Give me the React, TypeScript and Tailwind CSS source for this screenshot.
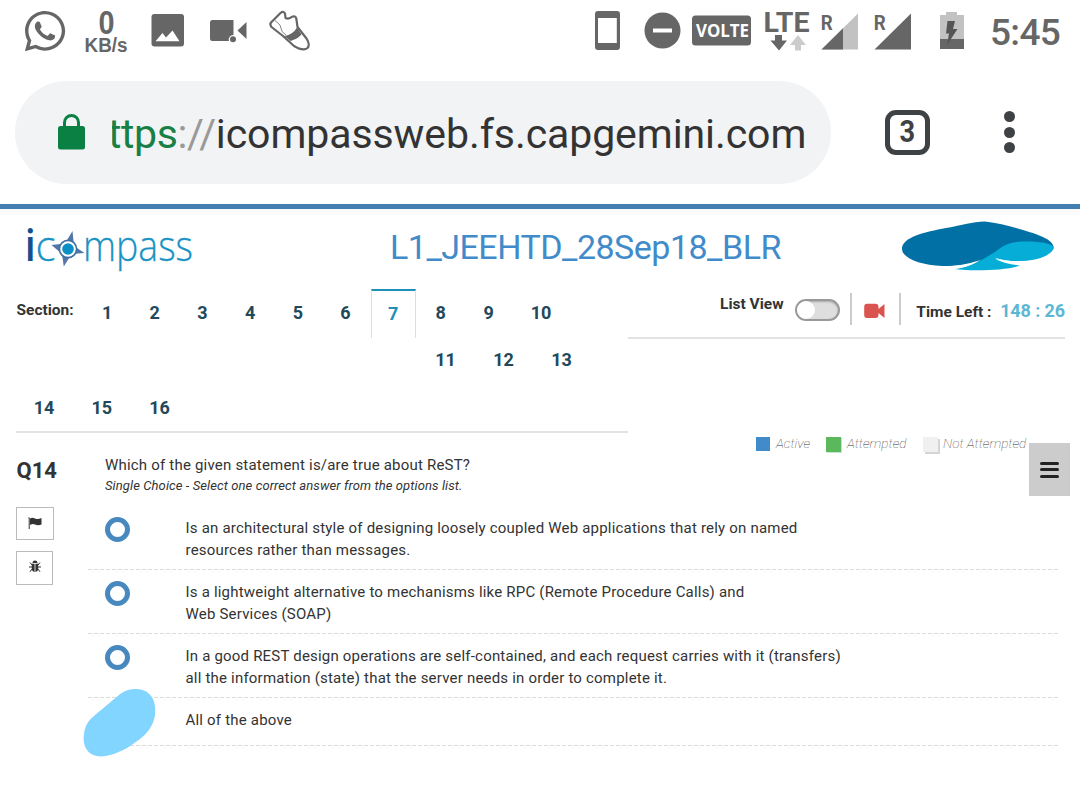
import React from "react";
import { FaWhatsapp } from "react-icons/fa";

const GREY = "#666666";

function StatusBar() {
  return (
    <div className="flex h-[64px] items-start text-[#666666]">
      <FaWhatsapp className="ml-[22px] mt-[8px] h-[46px] w-[46px] shrink-0" />
      <svg className="ml-[16px] mt-[8px] shrink-0 overflow-visible" width="46" height="46" viewBox="84 8 46 46" fill={GREY}>
        <text x="98.500" y="33.500" fontFamily="Liberation Sans" fontWeight="700" fontSize="34" textLength="16" lengthAdjust="spacingAndGlyphs">0</text>
        <text x="84.500" y="51.500" fontFamily="Liberation Sans" fontWeight="700" fontSize="19.500" textLength="43" lengthAdjust="spacingAndGlyphs">KB/s</text>
      </svg>
      <svg className="ml-[20px] mt-[12px] shrink-0" width="36" height="36" viewBox="150 12 36 36">
        <rect x="151.500" y="14" width="32.500" height="32.500" rx="3" fill={GREY} />
        <path d="M155.500 41.200 L162.500 33 L166 37.500 L172.500 30.500 L179.500 41.200 Z" fill="#fff" />
      </svg>
      <svg className="ml-[22px] mt-[16px] shrink-0" width="42" height="30" viewBox="208 16 42 30">
        <path d="M212.500 20 H233.500 V35 A4.500 4.500 0 0 0 229 41 H212.500 A2.500 2.500 0 0 1 210 38.500 V22.500 A2.500 2.500 0 0 1 212.500 20Z M237.500 30.500 L246.500 22 V39 Z" fill={GREY} />
        <circle cx="233" cy="39.300" r="3" fill={GREY} />
      </svg>
      <svg className="ml-[18px] mt-[8px] shrink-0" width="46" height="46" viewBox="268 8 46 46">
        <path d="M271 22.500 L280.500 13 Q283.500 10.500 285 13.500 L285.500 18 Q289 19.500 292 16.800 Q295.500 15.500 296.300 18.500 L297.500 27 L306.500 38.500 Q310.500 45 307.500 48 Q303.500 51.500 294 46 L283 36 L271.500 27 Q269.500 24.500 271 22.500Z" fill="#fff" stroke={GREY} strokeWidth="2.200" strokeLinejoin="round" />
        <path d="M284.500 36 Q293 34.500 297 27.500 L301.500 34.500 Q297.500 39 290.500 41Z" fill={GREY} />
        <path d="M275 20.500 L280 25 L282 31.500 L286 35" fill="none" stroke={GREY} strokeWidth="0.800" />
      </svg>
      <svg className="ml-[280px] mt-[9px] shrink-0" width="28" height="43" viewBox="594 9 28 43">
        <path fillRule="evenodd" fill={GREY} d="M598 11 H617 Q620 11 620 14 V47 Q620 50 617 50 H598 Q595 50 595 47 V14 Q595 11 598 11Z M598 18 V43 H616.800 V18Z" />
      </svg>
      <svg className="ml-[21px] mt-[11px] shrink-0" width="40" height="40" viewBox="643 11 40 40">
        <circle cx="662.500" cy="30.500" r="18" fill={GREY} />
        <rect x="653" y="28.500" width="19" height="4" fill="#fff" />
      </svg>
      <svg className="ml-[7px] mt-[13px] shrink-0" width="64" height="36" viewBox="690 13 64 36">
        <rect x="692" y="15.500" width="59" height="30" rx="3.500" fill={GREY} />
        <text x="696" y="37" fill="#fff" fontFamily="Open Sans" fontWeight="700" fontSize="17.500" textLength="53" lengthAdjust="spacingAndGlyphs">VOLTE</text>
      </svg>
      <svg className="ml-[9px] mt-[8px] shrink-0 overflow-visible" width="48" height="46" viewBox="763 8 48 46">
        <text x="763.500" y="31.700" fill={GREY} fontFamily="Roboto" fontWeight="700" fontSize="27.500" textLength="46" lengthAdjust="spacingAndGlyphs">LTE</text>
        <path d="M775 35 H782 V40.500 H787 L779 50.500 L770.500 40.500 H775Z" fill={GREY} />
        <path d="M798 35 L806 45 H801 V50.500 H795 V45 H790Z" fill="#cccccc" />
      </svg>
      <svg className="ml-[9px] mt-[10px] shrink-0" width="40" height="42" viewBox="820 10 40 42">
        <path d="M821.500 49.500 L858 13.500 V49.500Z" fill="#c2c2c2" />
        <path d="M821.500 49.500 L843 28.200 V49.500Z" fill={GREY} />
        <text x="820.700" y="29.500" fill={GREY} fontFamily="Roboto" fontWeight="700" fontSize="21" textLength="12" lengthAdjust="spacingAndGlyphs">R</text>
      </svg>
      <svg className="ml-[13px] mt-[10px] shrink-0" width="40" height="42" viewBox="873 10 40 42">
        <path d="M874.500 49.500 L911 13.500 V49.500Z" fill={GREY} />
        <text x="873.700" y="29.500" fill={GREY} fontFamily="Roboto" fontWeight="700" fontSize="21" textLength="12" lengthAdjust="spacingAndGlyphs">R</text>
      </svg>
      <svg className="ml-[25px] mt-[10px] shrink-0" width="28" height="42" viewBox="938 10 28 42">
        <path d="M946 12 H957 V15 H964 V39 H940 V15 H946Z" fill="#c2c2c2" />
        <rect x="940" y="39" width="24" height="10" fill={GREY} />
        <path d="M947.500 21 H955 L953 29 H957.500 L947 45 L949 33.500 H946Z" fill="#555" />
      </svg>
      <span className="ml-[24px] mt-[12px] whitespace-nowrap font-['Roboto',sans-serif] text-[37px] font-medium leading-[42px] tracking-[-0.700px]">5:45</span>
    </div>
  );
}

function AddressBar() {
  return (
    <div className="flex h-[140px] items-start pl-[15px] pt-[17px]">
      <div className="flex h-[103px] w-[816px] shrink-0 items-center rounded-full bg-[#f1f3f5] pl-[42px]">
        <svg className="shrink-0" width="30" height="40" viewBox="57 113 30 40">
          <path d="M64.500 128 V122.500 A7 7 0 0 1 78.500 122.500 V128" fill="none" stroke="#0b8043" strokeWidth="3" />
          <rect x="58" y="126" width="27" height="23.500" rx="2.500" fill="#0b8043" />
        </svg>
        <div className="ml-[25px] mt-[2px] flex w-[700px] overflow-hidden whitespace-nowrap font-['Roboto',sans-serif] text-[41px] leading-[56px] text-[#333]">
          <span className="-ml-[4px] tracking-[-0.400px] text-[#188045]">ttps</span>
          <span className="tracking-[-0.300px] text-[#999]">://</span>
          <span className="tracking-[-0.080px]">icompassweb.fs.capgemini.com</span>
        </div>
      </div>
      <div className="ml-[54px] mt-[29px] flex h-[45px] w-[45px] shrink-0 items-center justify-center rounded-[11px] border-[5px] border-[#3f4245] font-['Roboto',sans-serif] text-[32px] font-bold leading-none text-[#3f4245]">
        <span className="-mt-[4px] scale-x-85">3</span>
      </div>
      <div className="ml-[74px] mt-[30px] flex flex-col gap-[4.500px]">
        <i className="size-[11px] rounded-full bg-[#3f4245]" />
        <i className="size-[11px] rounded-full bg-[#3f4245]" />
        <i className="size-[11px] rounded-full bg-[#3f4245]" />
      </div>
    </div>
  );
}

function CompassLogo() {
  return (
    <svg className="shrink-0 overflow-visible" width="176" height="60" viewBox="20 218 176 60" fontFamily="Open Sans">
      <text x="24.800" y="261" fontSize="43" fontWeight="600" fill="#14508c" textLength="11" lengthAdjust="spacingAndGlyphs">i</text>
      <g fontWeight="300" fill="#1a93c4" stroke="#1a93c4" strokeWidth="0.300">
        <text x="35.500" y="261" fontSize="43" textLength="20" lengthAdjust="spacingAndGlyphs">c</text>
        <text x="83" y="261" fontSize="43" textLength="110" lengthAdjust="spacingAndGlyphs">mpass</text>
      </g>
      <path d="M72.500 231 L74 246 L84.500 253 L71.500 254 L63.800 266.500 L62 254 L51.500 245 L65 243.500Z" fill="#5276a8" />
      <circle cx="68" cy="249" r="8.600" fill="#fff" stroke="#3f6fa3" strokeWidth="1.600" />
      <circle cx="68" cy="249" r="5.800" fill="#0b8fc4" />
    </svg>
  );
}

function WaveLogo() {
  return (
    <svg className="shrink-0" width="156" height="52" viewBox="900 220 156 52">
      <path d="M902 249 C902 237 925 232 946 228 C963 225 972 222 985 221.500 C998 223 1010 226 1023 230 C1040 235 1053 240 1053.500 247 L1012 258 L993 256 C980 264 962 266 942 266 C920 265 902 258 902 249Z" fill="#0070a5" />
      <path d="M1054 247 C1050 242 1034 241 1021 241.500 C1002 243 1000 250 990 255 C985 258 982 260 976 262.500 C970 266 962 268 954.500 269 C970 271 1004 271 1020 265.500 C1010 264.500 1000 262 995 258.500 C1006 262 1024 262 1037 259 C1048 256 1054 251 1054 247Z" fill="#05add7" />
      <path d="M942 266.800 C960 266 974 262.500 981 259.500 C976 263 968 267 954 269 Z M995 257.500 C1003 261 1020 262.500 1035 260 C1028 264 1004 264 995 257.500Z" fill="#fff" />
    </svg>
  );
}

function Header() {
  return (
    <header className="flex h-[80px] items-start border-t-[5px] border-[#437eb0]">
      <div className="flex h-full w-full items-start bg-linear-to-b from-[#f9f7f8] to-white to-10%">
        <div className="ml-[20px] mt-[9px]"><CompassLogo /></div>
        <h1 className="ml-[194px] mt-[16px] w-[511px] whitespace-nowrap font-['Roboto',sans-serif] text-[34px] leading-[44px] tracking-[-0.500px] text-[#428bca]">L1_JEEHTD_28Sep18_BLR</h1>
        <div className="-ml-[1px] mt-[11px]"><WaveLogo /></div>
      </div>
    </header>
  );
}

function Sections() {
  return (
    <nav className="ml-[16px] flex h-[144px] w-[612px] shrink-0 flex-col border-b-2 border-[#e3e3e3] text-[18px] font-bold leading-[48px] text-[#22495a]">
      <div className="flex h-[49px] text-center">
        <span className="w-[67px] whitespace-nowrap pl-[0.500px] text-left text-[15.500px] leading-[42px] text-[#333]">Section:</span>
        {[1, 2, 3, 4, 5, 6].map((n) => (
          <span key={n} className="w-[47.700px] pl-[0.500px]">{n}</span>
        ))}
        <span className="ml-[2px] w-[45px] border-x border-t-2 border-x-[#ddd] border-t-[#1f90b8] pr-px leading-[45px] text-[#1f90b8]">7</span>
        <span className="w-[49px]">8</span>
        <span className="w-[47px]">9</span>
        <span className="w-[58px]">10</span>
      </div>
      <div className="flex h-[48px] pl-[400.500px] text-center leading-[44px]">
        {[11, 12, 13].map((n) => (
          <span key={n} className="w-[58px]">{n}</span>
        ))}
      </div>
      <div className="flex h-[45px] text-center leading-[44px]">
        {[14, 15, 16].map((n) => (
          <span key={n} className="w-[57.700px] pr-[1.500px]">{n}</span>
        ))}
      </div>
    </nav>
  );
}

function Tools() {
  return (
    <div className="flex w-[452px] flex-col">
      <div className="flex h-[50px] w-[437px] shrink-0 items-start border-b-2 border-[#e3e3e3] text-[15.500px] font-bold text-[#333]">
        <span className="ml-[92px] mt-[5px] w-[75px] whitespace-nowrap leading-5">List View</span>
        <div className="mt-[10px] h-[22px] w-[45px] rounded-full border-2 border-[#999] bg-[#dedede] shadow-[inset_0_1px_2px_#aaa]">
          <div className="size-[18px] rounded-full bg-white" />
        </div>
        <i className="ml-[10px] mt-[4px] h-[32px] w-[2px] bg-[#ccc]" />
        <svg className="ml-[12px] mt-[14px]" width="21" height="16" viewBox="0 0 21 16">
          <path d="M3 .8 H11.500 Q14.500 .8 14.500 4 V6 L20.500 1 V15 L14.500 10 V12 Q14.500 15 11.500 15 H3 Q.2 15 .2 12 V4 Q.2 .8 3 .8Z" fill="#d9534f" />
        </svg>
        <i className="ml-[14px] mt-[4px] h-[32px] w-[2px] bg-[#ccc]" />
        <span className="ml-[15.500px] mt-[13px] w-[84px] whitespace-nowrap leading-5">Time Left :</span>
        <span className="mt-[12px] whitespace-nowrap text-[18px] leading-5 tracking-[-0.100px] text-[#5bb7d3]">148 : 26</span>
      </div>
      <div className="flex h-[158px] shrink-0 items-start justify-end pr-[10px] pt-[96px]">
        <div className="flex h-[56px] items-start whitespace-nowrap text-[13.500px] font-thin italic leading-[17px] text-[#333]">
          <i className="mr-[6px] mt-[2px] size-[14px] bg-[#428bca]" />
          <span className="w-[50px]">Active</span>
          <i className="mr-[6px] mt-[2px] size-[15px] bg-[#5cb85c] shadow-[1px_1px_0_#bfe5cd]" />
          <span className="w-[76px]">Attempted</span>
          <i className="mr-[5px] mt-[2px] size-[15px] bg-[#f0f0f0] shadow-[2px_2px_0_#d5d5d5]" />
          <span className="w-[86px]">Not Attempted</span>
        </div>
        <div className="mt-[8px] flex h-[53px] w-[41px] shrink-0 flex-col items-center justify-center gap-[3.500px] bg-[#ccc]">
          <i className="h-[3px] w-[19px] rounded-sm bg-[#222]" />
          <i className="h-[3px] w-[19px] rounded-sm bg-[#222]" />
          <i className="h-[3px] w-[19px] rounded-sm bg-[#222]" />
        </div>
      </div>
    </div>
  );
}

const OPTIONS = [
  ["Is an architectural style of designing loosely coupled Web applications that rely on named", "resources rather than messages."],
  ["Is a lightweight alternative to mechanisms like RPC (Remote Procedure Calls) and", "Web Services (SOAP)"],
  ["In a good REST design operations are self-contained, and each request carries with it (transfers)", "all the information (state) that the server needs in order to complete it."],
];

function DashedLine() {
  return (
    <svg className="block" width="970" height="1">
      <line x1="0" y1="0.500" x2="970" y2="0.500" stroke="#dcdcdc" strokeDasharray="4 2" />
    </svg>
  );
}

function Question() {
  return (
    <main className="flex pl-[16px] text-[#333]">
      <aside className="flex w-[72px] shrink-0 flex-col pt-[26px]">
        <b className="pl-[0.500px] text-[22px] leading-[24px]">Q14</b>
        <div className="mt-[24px] flex h-[33px] w-[38px] items-center justify-center border border-[#bbb]">
          <svg width="14" height="13" viewBox="0 0 14 13">
            <path d="M.2 .5 H1.700 V12 H.7 V2Z M2 1.500 Q4.500 .2 7 1.500 Q10 2.800 13.500 1 V7.500 Q10 9 7 7.500 Q4.500 6.500 2 8Z" fill="#333" />
          </svg>
        </div>
        <div className="mt-[11px] flex h-[34px] w-[37px] items-center justify-center border border-[#bbb]">
          <svg className="-mt-[3px]" width="12" height="13" viewBox="0 0 12 13">
            <path d="M3.500 3 Q3.500 .5 6 .5 Q8.500 .5 8.500 3Z M2.800 3.700 H5.600 V12 Q2.800 11.500 2.800 8.500Z M6.400 3.700 H9.200 V8.500 Q9.200 11.500 6.400 12Z" fill="#333" />
            <path d="M3 5 L1 2.500 M3 7 H0 M3 9 L1 11.800 M9 5 L11 2.500 M9 7 H12 M9 9 L11 11.800" stroke="#333" fill="none" />
          </svg>
        </div>
      </aside>
      <section className="relative w-[970px] whitespace-nowrap pt-[22px]">
        <h2 className="pl-[17px] text-[15px] font-normal leading-[20px] tracking-[0.200px]">Which of the given statement is/are true about ReST?</h2>
        <p className="pl-[17px] text-[13px] italic leading-[22px] tracking-[0.100px]">Single Choice - Select one correct answer from the options list.</p>
        <div className="mt-[9px]">
          {OPTIONS.map((lines) => (
            <div key={lines[0]}>
              <div className="flex h-[63px] items-start pt-[11px] text-[15px] leading-[22px] tracking-[0.200px]">
                <i className="ml-[16.500px] size-[25px] shrink-0 rounded-full border-[5px] border-[#4788be]" />
                <p className="ml-[56px]">{lines[0]}<br />{lines[1]}</p>
              </div>
              <DashedLine />
            </div>
          ))}
          <p className="h-[47px] pl-[97.500px] pt-[11px] text-[15px] leading-[22px] tracking-[0.200px]">All of the above</p>
          <DashedLine />
        </div>
        <svg className="absolute -left-[5px] top-[255px]" width="74" height="70" viewBox="83 687 74 70">
          <path d="M84 733 C85 724 89 719 95 714 L119 694 C126 687 140 686 147 691 C154 696 156 704 155 714 C154 722 149 731 140 738 C132 744 122 751 110 754 C100 757 91 755 87 749 C84 745 83 739 84 733Z" fill="#82d5ff" />
        </svg>
      </section>
    </main>
  );
}

export default function App() {
  return (
    <div className="flex h-[789px] w-[1080px] flex-col overflow-hidden bg-white font-['Roboto',sans-serif]">
      <StatusBar />
      <AddressBar />
      <Header />
      <div className="flex h-[149px] shrink-0 pt-[5px]">
        <Sections />
        <Tools />
      </div>
      <Question />
    </div>
  );
}
